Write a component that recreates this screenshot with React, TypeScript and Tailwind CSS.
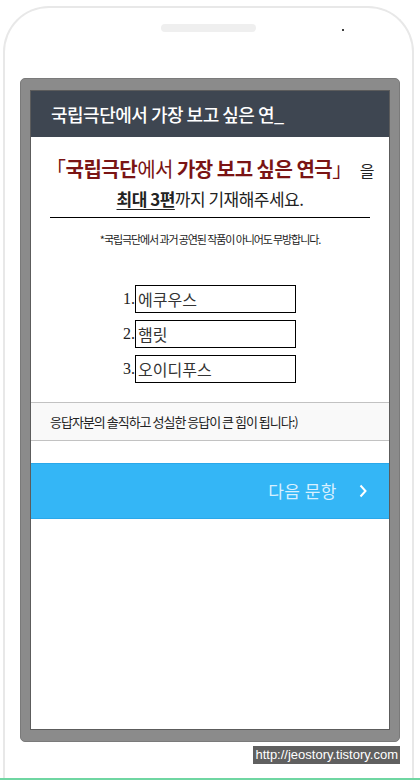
import React from "react";

const kr = "font-['Noto_Sans_CJK_KR','Noto_Sans',sans-serif]";

const answers = ["에쿠우스", "햄릿", "오이디푸스"];

export default function App() {
  return (
    <div className={`w-[420px] h-[780px] overflow-hidden bg-white pt-[6px] ${kr}`}>
      <div className="ml-[3px] w-[411px] h-[772px] border-2 border-b-0 border-[#e8e8e8] rounded-t-[46px]">
        {/* speaker + camera */}
        <div className="flex items-end pt-[16px] h-[8px] box-content">
          <div className="ml-[156px] w-[95px] h-[8px] rounded-full bg-[#efefef]" />
          <div className="ml-[86px] mb-[1px] w-[2px] h-[2px] rounded-full bg-black" />
        </div>

        {/* screen frame */}
        <div className="ml-[15px] mt-[46px] w-[380px] rounded-[5px] bg-[#8b8b8b] border border-[#7a7a7a] px-[9px] pt-[11px] pb-[11px]">
          <div className="h-[640px] bg-white border border-[#5c5c5c] flex flex-col">
            <div className="h-[46px] bg-[#3e4651] flex items-center pl-[20px]">
              <span className="text-white text-[18px] font-medium tracking-[-0.5px]">
                국립극단에서 가장 보고 싶은 연_
              </span>
            </div>

            <div className="pt-[19px] flex flex-col items-center">
              <p className="text-[20px] leading-[26px] text-[#7a1414] tracking-[-0.5px]">
                <span>「</span>
                <span className="font-bold">국립극단</span>
                <span>에서 </span>
                <span className="font-bold">가장 보고 싶은 연극</span>
                <span>」</span>
                <span className="text-[#222] text-[16px] ml-[8px]">을</span>
              </p>
              <p className="mt-[4px] text-[17px] leading-[24px] text-[#222] tracking-[-0.5px]">
                <span className="font-bold underline underline-offset-[3px]">최대 3편</span>
                <span>까지 기재해주세요.</span>
              </p>
            </div>

            <div className="mt-[6px] mx-[19px] h-px bg-black" />

            <p className="mt-[14px] text-center text-[11px] leading-[14px] text-[#222] tracking-[-1.1px]">
              *국립극단에서 과거 공연된 작품이 아니어도 무방합니다.
            </p>

            <div className="mt-[39px] flex flex-col gap-[7px] pl-[87px]">
              {answers.map((a, i) => (
                <div key={a} className="flex items-center">
                  <span className="w-[17px] text-right text-[16px] text-[#222] font-['Liberation_Serif',serif]">
                    {i + 1}.
                  </span>
                  <div className="w-[161px] h-[28px] border border-black flex items-center pl-[2px] text-[16px] text-[#333]">
                    {a}
                  </div>
                </div>
              ))}
            </div>

            <div className="mt-[19px] h-[39px] bg-[#f9f9f9] border-y border-[#c2c2c2] flex items-center pl-[19px]">
              <span className="text-[13px] text-[#222] tracking-[-1px]">
                응답자분의 솔직하고 성실한 응답이 큰 힘이 됩니다:)
              </span>
            </div>

            <div className="mt-[22px] h-[56px] bg-[#34b6f6] border-y border-[#2aa8ea] flex items-center justify-end pr-[22px]">
              <span className="text-[17px] text-[#d8f0ff] tracking-[0.5px]">다음 문항</span>
              <svg className="ml-[22px]" width="8" height="14" viewBox="0 0 8 14">
                <path d="M1.5 1.5 L6.5 7 L1.5 12.5" fill="none" stroke="#ffffff" strokeWidth="2" />
              </svg>
            </div>
          </div>
        </div>

        <div className="flex justify-end w-[395px] mt-[4px]">
          <span className="bg-[#606060] text-white text-[13px] leading-[18px] px-[2px] font-['Liberation_Sans',sans-serif]">
            http://jeostory.tistory.com
          </span>
        </div>
      </div>
      <div className="h-[2px] bg-[#6fd6a2]" />
    </div>
  );
}
